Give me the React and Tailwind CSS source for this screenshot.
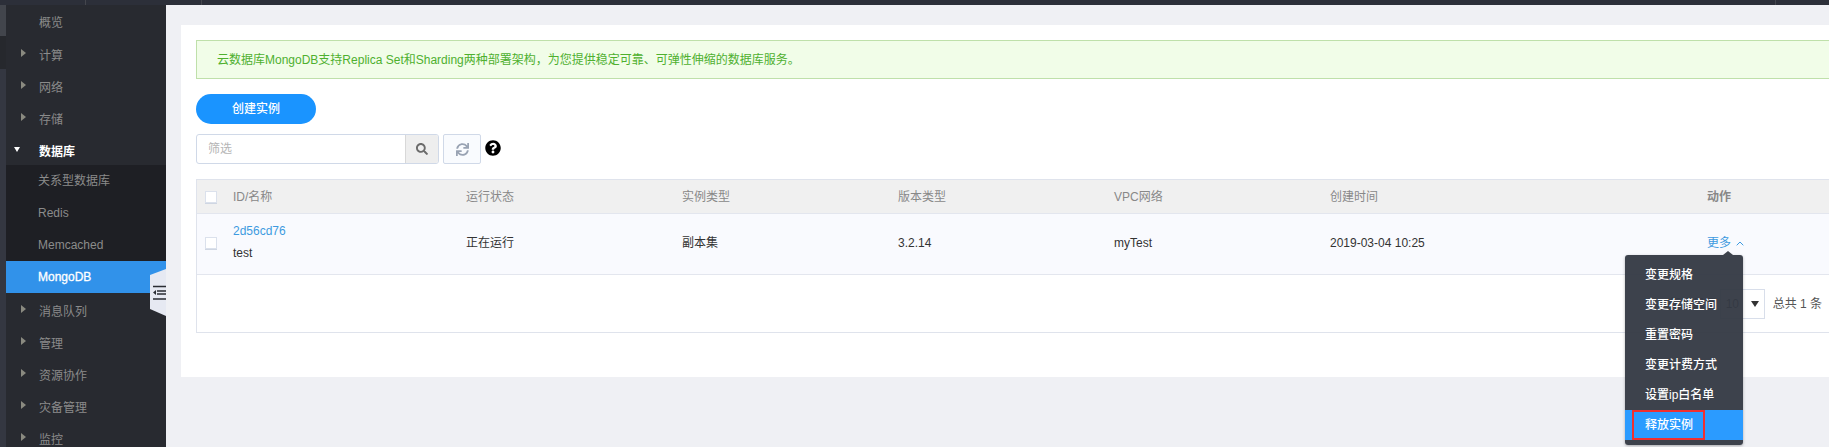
import React from "react";
import { FaSearch, FaSync, FaQuestionCircle } from "react-icons/fa";

const FONT = "font-['Liberation_Sans','Noto_Sans_CJK_SC',sans-serif]";

function NavGroup({ label }) {
  return (
    <div className="relative h-[32px] shrink-0 flex items-center pl-[33px] pt-[2px] text-[12px] text-[#8b8b8b]">
      <span className="absolute left-[15px] top-[10px] w-0 h-0 border-y-[4px] border-y-transparent border-l-[5px] border-l-[#8a8a80]" />
      {label}
    </div>
  );
}

function NavSub({ label, active }) {
  return (
    <div className={`h-[32px] shrink-0 flex items-center pl-[32px] text-[12px] ${active ? "bg-[#3192ea] text-white [-webkit-text-stroke:0.3px_white]" : "text-[#8b8b8b]"}`}>
      {label}
    </div>
  );
}

function Sidebar() {
  return (
    <aside className="relative w-[166px] shrink-0 flex h-full">
      <div className="w-[6px] bg-[#343741] flex flex-col">
        <div className="h-[31px] bg-[#42454c]" />
        <div className="h-[33px] bg-[#26282d]" />
      </div>
      <div className="flex-1 bg-[#282a30] flex flex-col overflow-hidden pt-[2px]">
        <div className="h-[32px] shrink-0 flex items-center pl-[33px] text-[12px] text-[#8b8b8b]">概览</div>
        <NavGroup label="计算" />
        <NavGroup label="网络" />
        <NavGroup label="存储" />
        <div className="relative h-[30px] shrink-0 flex items-center pl-[33px] pt-[4px] text-[12px] font-bold text-white">
          <span className="absolute left-[8px] top-[12px] w-0 h-0 border-x-[3.5px] border-x-transparent border-t-[5px] border-t-white" />
          数据库
        </div>
        <div className="bg-[#1e1f24] shrink-0">
          <NavSub label="关系型数据库" />
          <NavSub label="Redis" />
          <NavSub label="Memcached" />
        </div>
        <NavSub label="MongoDB" active />
        <div className="h-[2px] shrink-0" />
        <NavGroup label="消息队列" />
        <NavGroup label="管理" />
        <NavGroup label="资源协作" />
        <NavGroup label="灾备管理" />
        <NavGroup label="监控" />
      </div>
      <div className="absolute left-[150px] top-[264px] w-[16px] h-[47px] bg-[#e6e9f2] [clip-path:polygon(100%_0,100%_100%,0_85%,0_13%)]">
        <svg width="16" height="47" viewBox="0 0 16 47">
          <path d="M3 17.500h13M7 22h9M7 25h9M3 30h13" stroke="#2a2d33" strokeWidth="1.3" fill="none" />
          <path d="M3 23.500l3-2.600v5.200z" fill="#2a2d33" />
        </svg>
      </div>
    </aside>
  );
}

function Checkbox() {
  return <span className="block w-[12px] h-[12px] bg-white border border-[#dbe1ec] shadow-[0_1px_0_#cfd6e2]" />;
}

function Row({ className, cells }) {
  return (
    <div className={`flex items-center ${className}`}>
      <div className="w-[36px] pl-[8px] shrink-0"><Checkbox /></div>
      <div className="w-[233px] shrink-0">{cells[0]}</div>
      <div className="w-[216px] shrink-0">{cells[1]}</div>
      <div className="w-[216px] shrink-0">{cells[2]}</div>
      <div className="w-[216px] shrink-0">{cells[3]}</div>
      <div className="w-[216px] shrink-0">{cells[4]}</div>
      <div className="w-[377px] shrink-0">{cells[5]}</div>
      <div className="shrink-0">{cells[6]}</div>
    </div>
  );
}

const menu = ["变更规格", "变更存储空间", "重置密码", "变更计费方式", "设置ip白名单"];

function Dropdown() {
  return (
    <div className="absolute left-[1625px] top-[255px] w-[118px] h-[190px] rounded-[3px] bg-[rgba(51,56,66,0.95)] pt-[5px] text-[12px] font-medium text-white shadow-[0_1px_3px_rgba(0,0,0,0.3)]">
      <span className="absolute left-[98px] -top-[4px] w-0 h-0 border-x-[5px] border-x-transparent border-b-[4px] border-b-[#3d424b]" />
      {menu.map((m) => (
        <div key={m} className="h-[30px] flex items-center pl-[20px]">{m}</div>
      ))}
      <div className="relative h-[30px] flex items-center pl-[20px] bg-[#2b9bff]">
        释放实例
        <span className="absolute left-[7px] top-0 w-[73px] h-[30px] border-2 border-[#f03030]" />
      </div>
    </div>
  );
}

export default function App() {
  return (
    <div className={`relative w-[1829px] h-[447px] overflow-hidden bg-[#eff0f4] ${FONT} flex flex-col`}>
      <div className="h-[5px] bg-[#2c2f39] shrink-0 flex">
        <div className="w-[86px] border-r border-[#44464d]" />
        <div className="w-[116px] border-r border-[#44464d]" />
        <div className="w-[1574px] border-r border-[#44464d]" />
      </div>
      <div className="flex flex-1 min-h-0">
        <Sidebar />
        <main className="flex-1 min-w-0 pl-[15px] pt-[20px]">
          <div className="bg-white h-[352px] pl-[15px] pt-[15px] overflow-hidden">
            <div className="h-[39px] bg-[#f1fde8] border border-r-0 border-[#bfe0aa] flex items-center pl-[20px] text-[12px] text-[#4eb02f]">
              云数据库MongoDB支持Replica Set和Sharding两种部署架构，为您提供稳定可靠、可弹性伸缩的数据库服务。
            </div>
            <button className="mt-[15px] block w-[120px] h-[30px] rounded-full bg-[#1a94ff] text-white text-[12px] font-medium">创建实例</button>
            <div className="mt-[10px] flex items-center h-[30px]">
              <div className="w-[243px] h-[30px] flex border border-[#d0d9e8] rounded-[3px] overflow-hidden">
                <div className="flex-1 flex items-center pl-[11px] text-[12px] text-[#b5b5b5]">筛选</div>
                <div className="w-[33px] bg-[#eeeeee] border-l border-[#d8d8d8] flex items-center justify-center text-[#6b6b6b]">
                  <FaSearch size={12} />
                </div>
              </div>
              <div className="ml-[4px] w-[38px] h-[30px] border border-[#d0d9e8] rounded-[2px] bg-[#f9fbfe] flex items-center justify-center text-[#99a3b3]">
                <FaSync size={13} />
              </div>
              <FaQuestionCircle size={16} className="ml-[4px] text-black mb-[2px]" />
            </div>
            <div className="mt-[15px] h-[154px] border border-[#dfe3ec] border-r-0 text-[12px]">
              <Row
                className="h-[34px] bg-[#f0f0f0] border-b border-[#e3e6ee] text-[#888888]"
                cells={["ID/名称", "运行状态", "实例类型", "版本类型", "VPC网络", "创建时间", <span className="font-bold">动作</span>]}
              />
              <Row
                className="h-[61px] pb-[2px] bg-[#f9fafe] border-b border-[#e3e6ee] text-[#333333]"
                cells={[
                  <div className="flex flex-col gap-[7px] leading-[15px] mb-[2px]"><span className="text-[#3e9ae0]">2d56cd76</span><span>test</span></div>,
                  "正在运行", "副本集", "3.2.14", "myTest", "2019-03-04 10:25",
                  <span className="text-[#3e9ae0] flex items-center gap-[5px]">更多
                    <svg width="8" height="5" viewBox="0 0 8 5"><path d="M.7 4.300L4 1l3.300 3.300" stroke="#3e9ae0" fill="none" /></svg>
                  </span>,
                ]}
              />
              <div className="flex items-center justify-end h-[57px] pr-[7px] text-[#555]">
                <span className="mr-[3px]">每页显示</span>
                <span className="relative w-[45px] h-[30px] border border-[#d8deea] flex items-center pl-[5px] text-[#555] bg-white">
                  10
                  <span className="absolute right-[5px] top-[11px] w-0 h-0 border-x-[4px] border-x-transparent border-t-[6px] border-t-[#333]" />
                </span>
                <span className="ml-[8px]">总共 1 条</span>
              </div>
            </div>
          </div>
        </main>
      </div>
      <Dropdown />
    </div>
  );
}
